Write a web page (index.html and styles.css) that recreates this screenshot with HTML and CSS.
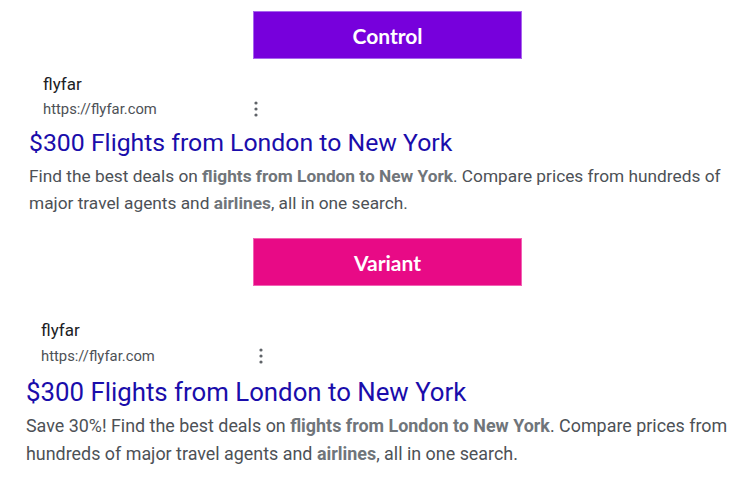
FILE: index.html
```html
<!DOCTYPE html>
<html>
<head>
<meta charset="utf-8">
<link rel="stylesheet" href="styles.css">
</head>
<body>
<div class="page">
  <div class="label label-control">Control</div>
  <div class="result result-a">
    <div class="site">flyfar</div>
    <div class="url-row">
      <span class="url">https://flyfar.com</span>
      <svg class="kebab" width="4" height="16" viewBox="0 0 4 16"><circle cx="2" cy="2" r="1.6" fill="#5f6368"/><circle cx="2" cy="8" r="1.6" fill="#5f6368"/><circle cx="2" cy="14" r="1.6" fill="#5f6368"/></svg>
    </div>
    <div class="title">$300 Flights from London to New York</div>
    <div class="desc">Find the best deals on <b>flights from London to New York</b>. Compare prices from hundreds of major travel agents and <b>airlines</b>, all in one search.</div>
  </div>
  <div class="label label-variant">Variant</div>
  <div class="result result-b">
    <div class="site">flyfar</div>
    <div class="url-row">
      <span class="url">https://flyfar.com</span>
      <svg class="kebab" width="4" height="16" viewBox="0 0 4 16"><circle cx="2" cy="2" r="1.6" fill="#5f6368"/><circle cx="2" cy="8" r="1.6" fill="#5f6368"/><circle cx="2" cy="14" r="1.6" fill="#5f6368"/></svg>
    </div>
    <div class="title">$300 Flights from London to New York</div>
    <div class="desc">Save 30%! Find the best deals on <b>flights from London to New York</b>. Compare prices from hundreds of major travel agents and <b>airlines</b>, all in one search.</div>
  </div>
</div>
</body>
</html>
```
FILE: styles.css
```css
html, body {
  margin: 0;
  padding: 0;
  background: #ffffff;
}
.page {
  width: 749px;
  height: 481px;
  overflow: hidden;
  display: flex;
  flex-direction: column;
  font-family: Roboto, "Liberation Sans", Arial, sans-serif;
}
.label {
  box-sizing: border-box;
  width: 269px;
  height: 48px;
  margin-left: 253px;
  display: flex;
  align-items: center;
  justify-content: center;
  color: #ffffff;
  font-family: Lato, "Open Sans", sans-serif;
  font-weight: 700;
  font-size: 21px;
}
.label-control {
  margin-top: 11px;
  background: #7700dc;
  border: 1px solid #a866ee;
}
.label-variant {
  margin-top: 21px;
  background: #e80a86;
  border: 1px solid #f262b4;
}
.result-a {
  padding-left: 29px;
  margin-top: 13px;
}
.result-b {
  padding-left: 26px;
  margin-top: 32px;
}
.site {
  margin-left: 14px;
  font-size: 17px;
  line-height: 24px;
  color: #202124;
}
.result-b .site {
  margin-left: 15px;
  line-height: 25px;
}
.url-row {
  display: flex;
  align-items: center;
  margin-left: 14px;
  height: 25px;
}
.result-b .url-row {
  margin-left: 15px;
}
.url {
  font-size: 14.8px;
  color: #4d5156;
  width: 211px;
}
.result-b .url {
  width: 218px;
}
.kebab {
  display: block;
}
.title {
  margin-top: 6px;
  font-size: 24.8px;
  line-height: 32px;
  color: #1a0dab;
}
.result-b .title {
  font-size: 25.8px;
  line-height: 34px;
  margin-top: 7px;
}
.desc {
  margin-top: 4px;
  font-size: 17.3px;
  line-height: 27px;
  color: #4d5156;
  width: 715px;
}
.result-b .desc {
  margin-top: 3px;
  font-size: 17.9px;
  line-height: 28px;
  width: 722px;
}
.desc b {
  color: #70757a;
  font-weight: 700;
}
```
